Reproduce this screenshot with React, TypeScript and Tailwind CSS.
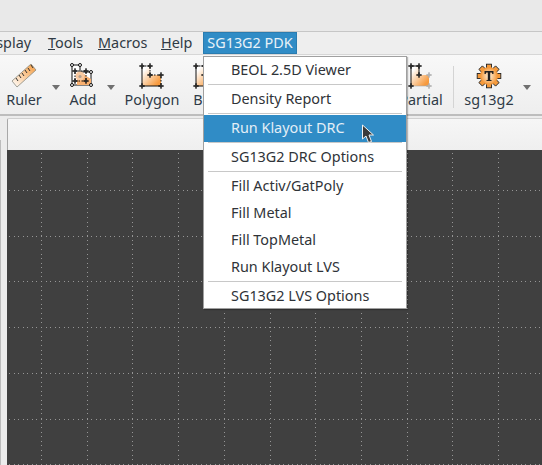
const font = { fontFamily: '"Noto Sans", "Liberation Sans", sans-serif' };

const MENU_ITEMS = [
  "BEOL 2.5D Viewer",
  "-",
  "Density Report",
  "-",
  "Run Klayout DRC",
  "-",
  "SG13G2 DRC Options",
  "-",
  "Fill Activ/GatPoly",
  "Fill Metal",
  "Fill TopMetal",
  "Run Klayout LVS",
  "-",
  "SG13G2 LVS Options",
];

function Handle({ x, y, dark = "#111" }: { x: number; y: number; dark?: string }) {
  return (
    <path
      d={`M${x} ${y - 3}L${x} ${y + 3}M${x - 3} ${y}L${x + 3} ${y}M${x - 1.5} ${y}L${x} ${y - 1.5}L${x + 1.5} ${y}L${x} ${y + 1.5}Z`}
      stroke={dark}
      strokeWidth="1"
      fill="#fff"
    />
  );
}

function Defs() {
  return (
    <defs>
      <linearGradient id="org" x1="0" y1="0" x2="1" y2="1">
        <stop offset="0.15" stopColor="#fff" />
        <stop offset="0.85" stopColor="#f79a3e" />
      </linearGradient>
    </defs>
  );
}

function RulerIcon() {
  return (
    <svg width="26" height="26" viewBox="0 0 26 26">
      <defs>
        <linearGradient id="rul" x1="0" y1="1" x2="1" y2="0">
          <stop offset="0" stopColor="#fff" />
          <stop offset="1" stopColor="#f59a3c" />
        </linearGradient>
      </defs>
      <path d="M1 18L20 1L25 7L6 24Z" fill="url(#rul)" stroke="#8a8a80" strokeWidth="0.8" />
      <path
        d="M5 15l2 3M8 12l2 3M11 10l2 3M14 7l2 3M17 5l2 3M20 2l2 3"
        stroke="#333"
        strokeWidth="1"
      />
    </svg>
  );
}

function AddIcon() {
  return (
    <svg width="26" height="26" viewBox="0 0 26 26">
      <path d="M2 2H10V9H21V22H2Z" fill="#fff" stroke="#111" strokeWidth="1" />
      <path d="M7 22V13A5 5 0 0 1 16 13L21 16V22Z" fill="#f9b070" />
      <circle cx="10" cy="13" r="4.5" fill="#f9c9a0" />
      <circle cx="10" cy="13.5" r="1.6" fill="#b0a090" />
      <path d="M5 8H16V18H5Z" fill="none" stroke="#111" strokeWidth="1" strokeDasharray="1.5 1.5" />
      <circle cx="2" cy="2" r="1.5" fill="#fff" stroke="#111" />
      <circle cx="10" cy="2" r="1.5" fill="#fff" stroke="#111" />
      <circle cx="21" cy="9" r="1.5" fill="#fff" stroke="#111" />
      <circle cx="21" cy="22" r="1.5" fill="#fff" stroke="#111" />
      <circle cx="2" cy="22" r="1.5" fill="#fff" stroke="#111" />
      <Handle x={5} y={8} />
      <Handle x={16} y={8} />
      <Handle x={5} y={18} />
      <Handle x={16} y={18} />
    </svg>
  );
}

function PolygonIcon() {
  return (
    <svg width="26" height="26" viewBox="0 0 26 26">
      <Defs />
      <path d="M3 3V23H22V12H11V3Z" fill="url(#org)" />
      <path d="M3 3V23H22" fill="none" stroke="#111" strokeWidth="1" />
      <path d="M3 3H11V12H22V23" fill="none" stroke="#111" strokeWidth="1" strokeDasharray="1.5 1.5" />
      <Handle x={3} y={3} />
      <Handle x={11} y={3} />
      <Handle x={11} y={12} />
      <Handle x={22} y={12} />
      <Handle x={22} y={23} />
      <Handle x={3} y={23} />
    </svg>
  );
}

function PartialIcon() {
  return (
    <svg width="26" height="26" viewBox="0 0 26 26">
      <Defs />
      <path d="M3 3V23H21V12H11V3Z" fill="url(#org)" />
      <path d="M3 23V3H11V12" fill="none" stroke="#111" strokeWidth="1" />
      <path d="M3 23H21" fill="none" stroke="#aaa" strokeWidth="0.6" />
      <Handle x={3} y={3} />
      <Handle x={11} y={3} />
      <Handle x={11} y={12} />
      <Handle x={3} y={23} />
      <Handle x={21} y={12} dark="#aaa" />
      <Handle x={21} y={23} dark="#aaa" />
    </svg>
  );
}

function TechIcon() {
  const teeth = [0, 45, 90, 135, 180, 225, 270, 315];
  return (
    <svg width="26" height="26" viewBox="0 0 26 26">
      <defs>
        <radialGradient id="gear">
          <stop offset="0" stopColor="#fff2df" />
          <stop offset="1" stopColor="#f59a3c" />
        </radialGradient>
      </defs>
      {teeth.map((a) => (
        <rect
          key={a}
          x="10.5"
          y="1.2"
          width="5"
          height="5"
          fill="#f59a3c"
          stroke="#222"
          strokeWidth="0.9"
          transform={`rotate(${a} 13 13)`}
        />
      ))}
      <circle cx="13" cy="13" r="8.5" fill="url(#gear)" stroke="#f59a3c" strokeWidth="1" />
      <path d="M8.5 8H17.5V11H16.3L15.8 9.5H14.2V17H15.5V18H10.5V17H11.8V9.5H10.2L9.7 11H8.5Z" fill="#222" />
    </svg>
  );
}

function Arrow() {
  return <span className="shrink-0 w-0 h-0 border-x-[4px] border-x-transparent border-t-[5px] border-t-[#707070]" />;
}

function ToolButton({
  label,
  width,
  children,
}: {
  label: string;
  width: string;
  children: React.ReactNode;
}) {
  return (
    <div className={`flex flex-col items-center shrink-0 ${width}`}>
      <div className="h-[32px] pt-[3px] flex items-center justify-center">{children}</div>
      <span className="text-[14.4px] leading-[20px] text-[#2f3b47] whitespace-nowrap">{label}</span>
    </div>
  );
}

function CanvasGrid() {
  const step = 45.7;
  const dots: { x: number; y: number }[] = [];
  // 10 dots to each major division
  for (let l = 0; l < 12; l++) {
    const lineX = Math.round(34 + step * l);
    const lineY = Math.round(40 + step * l);
    for (let i = 0; i < 120; i++) {
      const p = Math.round(i * (step / 10));
      dots.push({ x: lineX, y: p + 3 });
      dots.push({ x: p + 2, y: lineY });
    }
  }
  return (
    <svg className="w-full h-full block" shapeRendering="crispEdges">
      {dots.map((d, i) => (
        <rect key={i} x={d.x} y={d.y} width="1" height="1" fill="#969696" />
      ))}
    </svg>
  );
}

export default function App() {
  return (
    <div className="w-[542px] h-[465px] relative overflow-hidden bg-[#ececec] flex flex-col" style={font}>
      <div className="h-[32px] shrink-0 bg-[#e9e9e9] border-b border-[#c6c6c6]" />

      {/* menu bar */}
      <div className="h-[23px] shrink-0 bg-[#eeeeee] flex items-stretch text-[14.4px] text-[#303a44] -ml-[28px] border-b border-[#d6d6d6]">
        <span className="flex items-center w-[76px] pl-[10px] whitespace-nowrap">Display</span>
        <span className="flex items-center w-[50px]"><span><u>T</u>ools</span></span>
        <span className="flex items-center w-[63px]"><span><u>M</u>acros</span></span>
        <span className="flex items-center w-[42px]"><span><u>H</u>elp</span></span>
        <span className="flex items-center justify-center w-[94px] bg-[#308cc6] text-[#e8f2f8] border border-[#2a7cb0] whitespace-nowrap">
          SG13G2 PDK
        </span>
      </div>

      {/* toolbar */}
      <div className="h-[61px] shrink-0 bg-gradient-to-b from-[#f8f8f8] to-[#eeeeee] border-b-2 border-[#bdbdbd] flex items-start pt-[3px]">
        <ToolButton label="Ruler" width="w-[48px]"><RulerIcon /></ToolButton>
        <div className="w-[15px] pt-[27px] flex justify-center"><Arrow /></div>
        <ToolButton label="Add" width="w-[40px]"><AddIcon /></ToolButton>
        <div className="w-[15px] pt-[27px] flex justify-center"><Arrow /></div>
        <ToolButton label="Polygon" width="w-[68px]"><PolygonIcon /></ToolButton>
        <ToolButton label="Box" width="w-[40px]"><PolygonIcon /></ToolButton>
        <div className="w-[170px]" />
        <ToolButton label="Partial" width="w-[50px]"><PartialIcon /></ToolButton>
        <div className="w-px h-[42px] mt-[8px] ml-[7px] bg-[#d4d4d4]" />
        <ToolButton label="sg13g2" width="w-[70px]"><TechIcon /></ToolButton>
        <div className="w-[6px] pt-[27px] flex justify-center"><Arrow /></div>
      </div>

      {/* tab strip and canvas */}
      <div className="flex-1 flex min-h-0">
        <div className="w-[7px] shrink-0 flex flex-col">
          <div className="h-[24px]" />
          <div className="flex-1 w-px bg-[#bcbcbc]" />
        </div>
        <div className="flex-1 flex flex-col pt-[2px] min-w-0">
          <div className="h-[32px] shrink-0 bg-gradient-to-b from-[#f6f6f6] to-[#efefef] border-t border-t-[#d0d0d0] border-l border-l-[#a8a8a8] rounded-tl-[2px]" />
          <div className="flex-1 bg-[#404040] min-h-0">
            <CanvasGrid />
          </div>
        </div>
      </div>

      {/* open menu */}
      <div className="absolute left-[203px] top-[56px] w-[204px] h-[253px] bg-white border border-[#a0a0a0] pt-px text-[14.4px] text-[#2f3338] shadow-[1px_1px_1px_rgba(0,0,0,0.25)]">
        {MENU_ITEMS.map((item, i) =>
          item === "-" ? (
            <div key={i} className="h-[2px] mx-[4px]">
              <div className="h-px bg-[#c8c8c8]" />
            </div>
          ) : (
            <div
              key={i}
              className={`${i === 0 ? "h-[26px]" : "h-[27px]"} flex items-center pl-[27px] pb-[2px] whitespace-nowrap ${
                i === 4 ? "bg-[#308cc6] text-[#e3eef6]" : ""
              }`}
            >
              {item}
            </div>
          ),
        )}
      </div>

      {/* mouse cursor */}
      <svg className="absolute left-[361px] top-[124px]" width="16" height="21" viewBox="0 0 16 21">
        <path d="M1.5 1V15L5 12L7.5 18.5L10.5 17.5L8 11H12.5Z" fill="#3a3a3a" stroke="#f2f2f2" strokeWidth="1" />
      </svg>
    </div>
  );
}
